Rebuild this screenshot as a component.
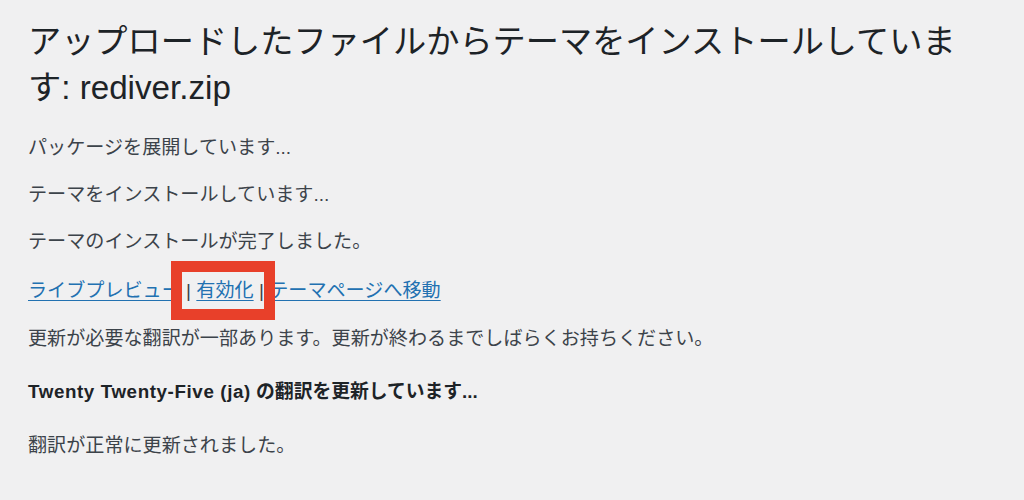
import React from "react";

const font = "font-['Liberation_Sans','Noto_Sans_CJK_JP',sans-serif]";

export default function App() {
  return (
    <div className={`min-h-[500px] w-[1024px] overflow-hidden bg-[#f0f0f1] pl-[28px] pt-[19px] ${font}`}>
      <h1 className="w-[950px] text-[33.2px] leading-[46px] font-normal text-[#1d2327]">
        アップロードしたファイルからテーマをインストールしています: rediver.zip
      </h1>

      <div className="text-[19.1px] leading-[28px] text-[#3c434a]">
        <p className="mt-[23px]">パッケージを展開しています...</p>
        <p className="mt-[19px]">テーマをインストールしています...</p>
        <p className="mt-[19px]">テーマのインストールが完了しました。</p>

        <p className="relative mt-[21px]">
          <a href="#" className="text-[#2271b1] underline underline-offset-[3px]">
            ライブプレビュー
          </a>{" "}
          |{" "}
          <a href="#" className="text-[#2271b1] underline underline-offset-[3px]">
            有効化
          </a>{" "}
          |{" "}
          <a href="#" className="text-[#2271b1] underline underline-offset-[3px]">
            テーマページへ移動
          </a>
          <span className="pointer-events-none absolute left-[143px] top-[-16px] h-[59px] w-[104px] border-[11px] border-[#e8402a]" />
        </p>

        <p className="mt-[20px]">
          更新が必要な翻訳が一部あります。更新が終わるまでしばらくお持ちください。
        </p>
        <p className="mt-[25px] text-[18.8px] font-bold text-[#1d2327]">
          <span className="tracking-[0.6px]">Twenty Twenty-Five (ja)</span> の翻訳を更新しています...
        </p>
        <p className="mt-[26px]">翻訳が正常に更新されました。</p>
      </div>
    </div>
  );
}
